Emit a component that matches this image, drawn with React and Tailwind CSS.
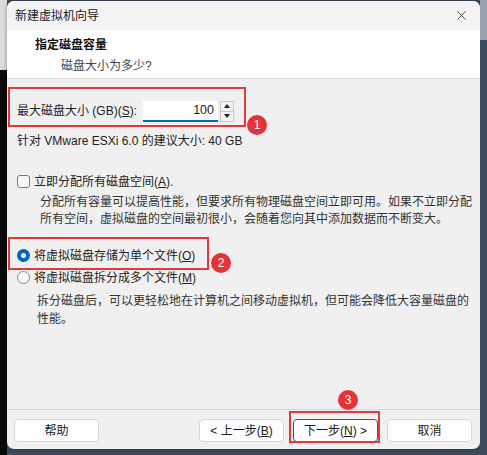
import { X } from 'lucide-react';

const font = { fontFamily: '"Liberation Sans", "Noto Sans CJK SC", sans-serif' };

// Key annotation overlay (red box + numbered badge)
const Badge = ({ n, className }) => (
  <div className={`absolute w-[20px] h-[20px] rounded-full bg-[#e8323a] text-white text-[12px] flex items-center justify-center ${className}`}>
    {n}
  </div>
);

const WinButton = ({ children, primary }) => (
  <button
    className={`w-[85px] h-[23px] rounded-[4px] bg-[#fdfdfd] text-[12px] text-[#1a1a1a] flex items-center justify-center border ${
      primary ? 'border-[#0067c0]' : 'border-[#d6d6d6]'
    }`}
  >
    {children}
  </button>
);

export default function App() {
  return (
    <div className="relative w-[487px] h-[455px] flex overflow-hidden bg-[#3d4b5c]" style={font}>
      {/* backdrop on the left */}
      <div className="w-[7px] flex flex-col">
        <div className="h-[70px] bg-[#dcdcdc]" />
        <div className="flex-1 bg-[#0a0a0a]" />
      </div>

      {/* dialog */}
      <div className="mt-[1px] w-[473px] h-[448px] rounded-[7px] overflow-hidden flex flex-col bg-[#f0f0f0] shadow-[0_0_4px_rgba(0,0,0,0.4)]">
        {/* title bar */}
        <div className="h-[29px] bg-[#f3f3f3] flex items-center justify-between pl-[8px] pr-[11px]">
          <span className="text-[12px] text-[#1a1a1a]">新建虚拟机向导</span>
          <X size={15} strokeWidth={1.3} className="text-[#222]" />
        </div>

        {/* header */}
        <div className="h-[49px] bg-white border-b border-[#dadada] flex flex-col pl-[28px] pt-[7px]">
          <span className="text-[12px] font-bold text-[#111] leading-[17px]">指定磁盘容量</span>
          <span className="text-[12px] text-[#444] leading-[17px] pl-[26px] mt-[4px]">磁盘大小为多少?</span>
        </div>

        {/* body */}
        <div className="flex-1 flex flex-col pl-[10px] pt-[21px] text-[12px] text-[#222]">
          <div className="h-[22px] flex items-center">
            <span className="w-[126px]">
              最大磁盘大小 (GB)(<span className="underline">S</span>):
            </span>
            <div className="w-[75px] h-[21px] bg-white border-b-2 border-[#0067c0] flex items-center justify-end pr-[4px] text-[12.5px]">
              100
            </div>
            <div className="w-[14px] h-[21px] ml-[2px] flex flex-col border border-[#c8c8c8] bg-[#f4f4f4]">
              <div className="flex-1 flex items-center justify-center border-b border-[#c8c8c8]">
                <div className="w-0 h-0 border-l-[3px] border-r-[3px] border-b-[4px] border-l-transparent border-r-transparent border-b-[#222]" />
              </div>
              <div className="flex-1 flex items-center justify-center">
                <div className="w-0 h-0 border-l-[3px] border-r-[3px] border-t-[4px] border-l-transparent border-r-transparent border-t-[#222]" />
              </div>
            </div>
          </div>

          <div className="mt-[11px] h-[17px] leading-[17px]">针对 VMware ESXi 6.0 的建议大小: 40 GB</div>

          <div className="mt-[23px] h-[17px] flex items-center">
            <div className="w-[13px] h-[13px] rounded-[3px] border border-[#7a7a7a] bg-[#fafafa]" />
            <span className="ml-[4px]">
              立即分配所有磁盘空间(<span className="underline">A</span>).
            </span>
          </div>

          <div className="mt-[4px] pl-[23px] leading-[17px] text-[#333] whitespace-nowrap">
            <div>分配所有容量可以提高性能，但要求所有物理磁盘空间立即可用。如果不立即分配</div>
            <div>所有空间，虚拟磁盘的空间最初很小，会随着您向其中添加数据而不断变大。</div>
          </div>

          <div className="mt-[19px] h-[17px] flex items-center">
            <div className="w-[13px] h-[13px] rounded-full bg-[#0067c0] flex items-center justify-center">
              <div className="w-[5px] h-[5px] rounded-full bg-white" />
            </div>
            <span className="ml-[4px]">
              将虚拟磁盘存储为单个文件(<span className="underline">O</span>)
            </span>
          </div>

          <div className="mt-[5px] h-[17px] flex items-center">
            <div className="w-[13px] h-[13px] rounded-full border border-[#8a8a8a] bg-[#fafafa]" />
            <span className="ml-[4px]">
              将虚拟磁盘拆分成多个文件(<span className="underline">M</span>)
            </span>
          </div>

          <div className="mt-[6px] pl-[20px] leading-[18px] text-[#333] whitespace-nowrap">
            <div>拆分磁盘后，可以更轻松地在计算机之间移动虚拟机，但可能会降低大容量磁盘的</div>
            <div>性能。</div>
          </div>
        </div>

        {/* footer */}
        <div className="h-[40px] border-t border-[#d4d4d4] flex items-start pt-[9px] pl-[7px]">
          <WinButton>帮助</WinButton>
          <div className="ml-[100px]">
            <WinButton>
              &lt; 上一步(<span className="underline">B</span>)
            </WinButton>
          </div>
          <div className="ml-[9px]">
            <WinButton primary>
              下一步(<span className="underline">N</span>) &gt;
            </WinButton>
          </div>
          <div className="ml-[9px]">
            <WinButton>取消</WinButton>
          </div>
        </div>
      </div>

      {/* backdrop on the right */}
      <div className="flex-1 flex flex-col">
        <div className="h-[40px] bg-[#9aa3ad]" />
        <div className="flex-1 bg-[#3d4b5c]" />
      </div>

      {/* annotations */}
      <div className="absolute left-[8px] top-[87px] w-[238px] h-[40px] border-2 border-[#e53939]" />
      <Badge n="1" className="left-[247px] top-[115px]" />
      <div className="absolute left-[8px] top-[237px] w-[201px] h-[33px] border-2 border-[#e53939]" />
      <Badge n="2" className="left-[211px] top-[253px]" />
      <div className="absolute left-[289px] top-[411px] w-[91px] h-[32px] border-2 border-[#e53939]" />
      <Badge n="3" className="left-[338px] top-[390px]" />
    </div>
  );
}
